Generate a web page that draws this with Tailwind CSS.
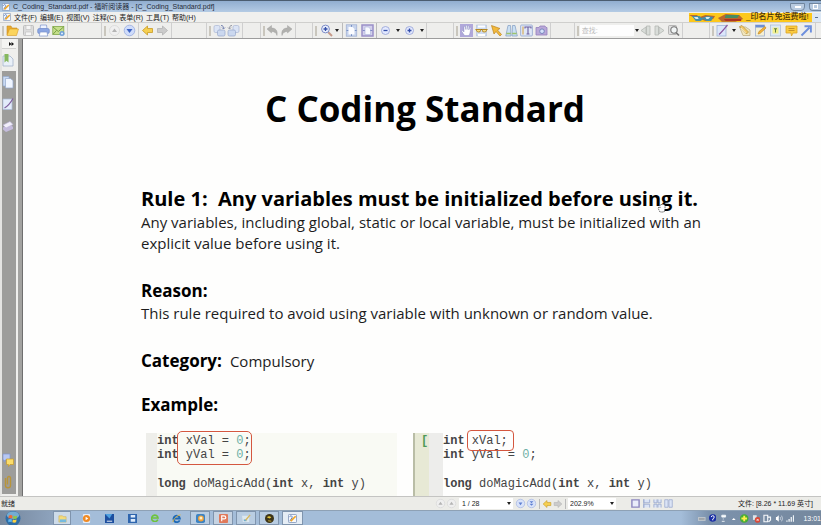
<!DOCTYPE html>
<html lang="zh-CN">
<head>
<meta charset="utf-8">
<title>C_Coding_Standard.pdf</title>
<script src="https://cdn.jsdelivr.net/npm/@tailwindcss/browser@4"></script>
</head>
<body class="h-screen overflow-hidden flex flex-col bg-[#ededeb] text-[#222] font-['Liberation_Sans','Noto_Sans_CJK_SC',sans-serif]">
<svg class="hidden">
  <symbol id="caret" viewBox="0 0 4 3"><path d="M0 0h4L2 3z" fill="#222"/></symbol>
  <symbol id="folder" viewBox="0 0 13 13"><path d="M1 11V2h4l1 2h5v2" fill="#e9a92c" stroke="#c98d1e" stroke-width=".6"/><path d="M1 11.5 3.500 5H12.500L10.500 11.500z" fill="#fbd45c" stroke="#d69a25" stroke-width=".6"/></symbol>
  <symbol id="save" viewBox="0 0 13 13"><rect x="1.500" y="1.500" width="10" height="10" rx="1" fill="#dcdcdc" stroke="#bdbdbd"/><path d="M4 1.500h5v4H4zM3.500 8h6v3.500h-6z" fill="#f5f5f5" stroke="#c4c4c4" stroke-width=".7"/></symbol>
  <symbol id="print" viewBox="0 0 13 13"><path d="M3.500 1h6l.5 4H3z" fill="#eef3ff" stroke="#7c93cc" stroke-width=".7"/><rect x=".7" y="4.500" width="11.600" height="5" rx="1.500" fill="#8ba6e3" stroke="#6a85c4" stroke-width=".6"/><path d="M3 8h7l.7 4H2.300z" fill="#fff" stroke="#7c93cc" stroke-width=".7"/></symbol>
  <symbol id="mail" viewBox="0 0 13 13"><rect x=".8" y="2.500" width="11" height="8" fill="#c6df8b" stroke="#7fa747" stroke-width=".8"/><path d="M1 3l5.300 4.500L11.500 3M1 10.300l3.600-4" fill="none" stroke="#6f9a3d" stroke-width=".9"/><circle cx="10" cy="9.500" r="2.500" fill="#6f9fd8"/><circle cx="10" cy="9.500" r="1" fill="#e6f0fa"/></symbol>
  <symbol id="up" viewBox="0 0 13 13"><circle cx="6.500" cy="6.500" r="5" fill="#efefef" stroke="#d4d4d4" stroke-width=".7"/><path d="M6.500 4.500 9 8H4z" fill="#b4b4b4"/></symbol>
  <symbol id="down" viewBox="0 0 13 13"><circle cx="6.500" cy="6.500" r="5.300" fill="#cfdcfa" stroke="#98abde" stroke-width=".8"/><path d="M6.500 9 9.500 5h-6z" fill="#3e64c4"/></symbol>
  <symbol id="navdown" viewBox="0 0 13 13"><circle cx="6.500" cy="6.500" r="5" fill="#d9e3fa" stroke="#a3b4e2" stroke-width=".8"/><path d="M6.500 8.500 8.800 5.300H4.200z" fill="#5f7fd0"/></symbol>
  <symbol id="navlast" viewBox="0 0 13 13"><circle cx="6.500" cy="6.500" r="5" fill="#d9e3fa" stroke="#a3b4e2" stroke-width=".8"/><path d="M6.500 6.300 8.800 3.800H4.200zM6.500 9.300 8.800 6.800H4.200z" fill="#5f7fd0"/></symbol>
  <symbol id="left" viewBox="0 0 13 13"><path d="M1.500 6.500 6.500 2v2.500H11.500v4H6.500V11z" fill="#f6cf50" stroke="#c89b24" stroke-width=".8"/></symbol>
  <symbol id="right" viewBox="0 0 13 13"><path d="M11.500 6.500 6.500 2v2.500H1.500v4h5V11z" fill="#cbcbcb" stroke="#b3b3b3" stroke-width=".8"/></symbol>
  <symbol id="rotr" viewBox="0 0 13 13"><rect x="1" y="1.500" width="6" height="7" rx="1.500" fill="#dbe4f5" stroke="#a9b6d2" stroke-width=".7"/><rect x="4.500" y="6" width="7.500" height="6" rx="1.500" fill="#cbd8ef" stroke="#97a7cc" stroke-width=".7"/><path d="M8 1.500c2 0 2.500 1 2.500 3M9 3.500l1.500 1.500L12 3.500" fill="none" stroke="#6776a8" stroke-width=".9"/></symbol>
  <symbol id="rotl" viewBox="0 0 13 13"><rect x="6" y="1.500" width="6" height="7" rx="1.500" fill="#dbe4f5" stroke="#a9b6d2" stroke-width=".7"/><rect x="1" y="6" width="7.500" height="6" rx="1.500" fill="#cbd8ef" stroke="#97a7cc" stroke-width=".7"/><path d="M5 1.500c-2 0-2.500 1-2.500 3M1 3.500 2.500 5 4 3.500" fill="none" stroke="#8a8d9c" stroke-width=".9"/></symbol>
  <symbol id="undo" viewBox="0 0 13 13"><path d="M1 5 5.500 1.500V4c4 0 6.500 2.500 5.500 7.500C10 8.500 8.500 7.500 5.500 7.500V9z" fill="#b1b1ae" stroke="#999" stroke-width=".4"/></symbol>
  <symbol id="redo" viewBox="0 0 13 13"><path d="M12 5 7.500 1.500V4C3.500 4 1 6.500 2 11.500 3 8.500 4.500 7.500 7.500 7.500V9z" fill="#b1b1ae" stroke="#999" stroke-width=".4"/></symbol>
  <symbol id="zoom" viewBox="0 0 13 13"><path d="m8 8 4 4" stroke="#c59a8a" stroke-width="2"/><circle cx="5.500" cy="5" r="3.900" fill="#e9effd" stroke="#7d8cc6" stroke-width="1"/><path d="M3.500 5h4M5.500 3v4" stroke="#344fa8" stroke-width="1.300"/></symbol>
  <symbol id="fitp" viewBox="0 0 13 13"><rect x="1.200" y=".8" width="10.600" height="11.400" fill="#c6d3ec" stroke="#94a6ce" stroke-width=".6"/><path d="M3.500 3h4l2 2v5.500h-6z" fill="#fbfcff"/><path d="M6.500 1v1.800M6.500 10.200V12M1.500 6.500h1.800M9.800 6.500h1.800" stroke="#6f8abf" stroke-width=".9"/></symbol>
  <symbol id="fitw" viewBox="0 0 13 13"><rect x="1" y="1" width="11" height="11" fill="#d3d0ec" stroke="#9a90c8" stroke-width="1.500"/><path d="M4 3h3.500l2 2v5.500H4z" fill="#f8faff" stroke="#a9b4da" stroke-width=".6"/><path d="M1.800 6.500h2M9.300 6.500h2" stroke="#7582c2" stroke-width=".9"/></symbol>
  <symbol id="minus" viewBox="0 0 13 13"><circle cx="6.500" cy="6.500" r="4" fill="#e4eaff" stroke="#9ca7d8" stroke-width=".9"/><path d="M4.500 6.500h4" stroke="#344fa8" stroke-width="1.300"/></symbol>
  <symbol id="plus" viewBox="0 0 13 13"><circle cx="6.500" cy="6.500" r="4" fill="#e4eaff" stroke="#9ca7d8" stroke-width=".9"/><path d="M4.500 6.500h4M6.500 4.500v4" stroke="#344fa8" stroke-width="1.300"/></symbol>
  <symbol id="hand" viewBox="0 0 13 13"><rect width="13" height="13" fill="#b0a8da"/><path d="M4.500 11.500 1.800 7.500c-.4-1 .8-1.300 1.500-.3L4 8V3c0-1 1.300-1 1.400 0l.3 2.500V2c0-1 1.400-1 1.400 0v3.500L7.500 2.500c.2-1 1.400-.8 1.400 0L8.800 6l.7-2c.4-.8 1.500-.5 1.300.3L10 9l-1 2.500z" fill="#fff" stroke="#8087bd" stroke-width=".4"/></symbol>
  <symbol id="glasses" viewBox="0 0 13 13"><path d="M1.500 1h10v11h-10z" fill="#cfdcf1" stroke="#b2c1da" stroke-width=".6"/><path d="M3 2.500h7M3 11h7" stroke="#fff" stroke-width="2"/><path d="M.5 5.500h12" stroke="#a07414" stroke-width="1"/><path d="M1.500 5.500h4v1.300q0 1.200-1.800 1.200T1.500 6.800zM7.500 5.500h4v1.300q0 1.200-2.200 1.200T7.500 6.800z" fill="#f5dc84" stroke="#b08420" stroke-width=".9"/></symbol>
  <symbol id="arrow" viewBox="0 0 13 13"><path d="m1.500 1.500 8.500 3-2.500 1.500 4 4.500-1.500 1.500-4-4.500L4 10z" fill="#f2b93a" stroke="#bd8420" stroke-width=".7"/></symbol>
  <symbol id="binoc" viewBox="0 0 13 13"><path d="M3 1.500h2.500L6 12H.8zM7.500 1.500H10L12.300 12H7z" fill="#cbe0f3" stroke="#8ba5c8" stroke-width=".8"/><path d="M1.300 9.500h4.500M7.200 9.500h4.500" stroke="#9cc26c" stroke-width="1.600"/></symbol>
  <symbol id="text" viewBox="0 0 13 13"><rect x=".6" y="1" width="11.800" height="11" rx="1" fill="#dfe7f7" stroke="#93a7cf" stroke-width=".8"/><path d="M3 2.500v8" stroke="#d6a33c"/><path d="M5 4.500V3h6v1.500M8 3v7M6.500 10h3" fill="none" stroke="#6c5f9f" stroke-width="1.100"/></symbol>
  <symbol id="cam" viewBox="0 0 13 13"><path d="M1 3.500h3l1-1.500h5l1 1.500h1V11H1z" fill="#b9a8d8" stroke="#9582be" stroke-width=".8"/><circle cx="7" cy="7.200" r="2.300" fill="#d6e2fa" stroke="#6f7fb8" stroke-width=".9"/></symbol>
  <symbol id="prev" viewBox="0 0 13 13"><path d="M7.500 2h3.500v9H7.500zM7 3v7L2 6.500z" fill="#d9ddd9" stroke="#b4b7b4" stroke-width=".8"/></symbol>
  <symbol id="next" viewBox="0 0 13 13"><path d="M2 2h3.500v9H2zM6 3v7l5-3.500z" fill="#d9ddd9" stroke="#b4b7b4" stroke-width=".8"/></symbol>
  <symbol id="find" viewBox="0 0 13 13"><rect x="1.500" y="1.500" width="8" height="9" rx="1" fill="#ddd" stroke="#a0a0a0" stroke-width=".7"/><circle cx="7" cy="6" r="3.200" fill="#f0f4f4" stroke="#777" stroke-width="1.100"/><path d="m9 8.500 3 3" stroke="#777" stroke-width="1.700"/></symbol>
  <symbol id="pen" viewBox="0 0 13 13"><rect x="1" y="1.500" width="9" height="10.500" fill="#dbe6fa" stroke="#9fb2d6" stroke-width=".8"/><path d="M3 10.500C6 8 9 4 11.500 1" stroke="#8b589f" stroke-width="1.300" fill="none"/></symbol>
  <symbol id="stamp" viewBox="0 0 13 13"><path d="M1.500 3h6l4.500 3v5.500H5z" fill="#f1e7bf" stroke="#b9a878" stroke-width=".7"/><path d="m1.500 2.500 2.500-1 6.500 6.500-2 2z" fill="#f0c766" stroke="#b18f45" stroke-width=".7"/><path d="m3 4 5 4.800" stroke="#fff3cf" stroke-width=".8"/></symbol>
  <symbol id="note" viewBox="0 0 13 13"><rect x="1.500" y="1" width="9" height="11" fill="#f4efd4" stroke="#9fb1d2" stroke-width=".8"/><path d="M1.500 1h9v2.500h-9z" fill="#6d8fd4"/><path d="m4 10 1-2.500L11 2.500l1 1.500-6 5.500z" fill="#f5b43a" stroke="#ba7f22" stroke-width=".6"/></symbol>
  <symbol id="tbox" viewBox="0 0 13 13"><rect x="1.500" y="1" width="10" height="11" fill="#dce9f6" stroke="#a9bad1" stroke-width=".7"/><path d="M3.500 3.500h6v6h-6z" fill="#f2ef8c"/><path d="M5 4.800h3M6.500 4.800v3.700" stroke="#5b7d43" stroke-width="1"/></symbol>
  <symbol id="comment" viewBox="0 0 13 13"><path d="M1 2h11v7H8l-1.500 3L6 9H1z" fill="#fbcb3f" stroke="#dca326" stroke-width=".8"/><path d="M3.500 4.500h6M3.500 6.500h6" stroke="#b98420" stroke-width=".8"/></symbol>
  <symbol id="link" viewBox="0 0 13 13"><path d="M1.500 11.500 9.500 3.500M4.500 2.300h6.400v6.200" stroke="#6d8fdd" stroke-width="1.900" fill="none"/></symbol>
  <symbol id="app" viewBox="0 0 10 10"><rect x=".5" y=".5" width="9" height="9" rx="1" fill="#f6f8fb" stroke="#6e86ae" stroke-width=".8"/><path d="M1.500 3.500C3 1 5 2 4.500 4L2 8" fill="none" stroke="#5a7fc2" stroke-width="1.100"/><path d="m3 8 5.500-5.500" stroke="#f0a424" stroke-width="1.900"/></symbol>
  <symbol id="bookmark" viewBox="0 0 12 14"><path d="M1 3h7l3 3v7H1z" fill="#e9f0f8" stroke="#a5b4ca" stroke-width=".8"/><path d="M2.500 1H6.500v8.500L4.500 7.800l-2 1.700z" fill="#86b85e"/></symbol>
  <symbol id="pages" viewBox="0 0 12 14"><path d="M1 1.500h6V11H1z" fill="#c9daf3" stroke="#93a9cd" stroke-width=".7"/><path d="M3.500 3.500h5l2.500 2V13H3.500z" fill="#eff5ff" stroke="#92a8cc" stroke-width=".7"/></symbol>
  <symbol id="sign" viewBox="0 0 12 14"><path d="M1 2h9v10.500H1z" fill="#e3ecfa" stroke="#aabbd8" stroke-width=".7"/><path d="M2.500 11C6 9 8.500 6 11 1.500" stroke="#80609f" stroke-width="1.200" fill="none"/></symbol>
  <symbol id="layers" viewBox="0 0 12 14"><path d="m1 8.500 7-3.500 3 3v2L4 13l-3-2.500z" fill="#c4bbdc"/><path d="m1 6 7-3.500 3 3L4 9z" fill="#f2effa" stroke="#b7aed3" stroke-width=".6"/></symbol>
  <symbol id="chat" viewBox="0 0 12 14"><path d="M1 1h7v6H3L2 9V7H1z" fill="#b8c8f2" stroke="#7f95d3" stroke-width=".7"/><path d="M4.500 6H11.500v5.500H8L6.500 13.500v-2h-2z" fill="#fbdd6b" stroke="#c79b2b" stroke-width=".7"/></symbol>
  <symbol id="clip" viewBox="0 0 12 14"><path d="M3.500 3v7.500q0 2.200 2.500 2.200t2.500-2.200V3.500Q8.500 1.500 7 1.500T5.500 3.500v6" fill="none" stroke="#b8943a" stroke-width="1.400"/></symbol>
  <symbol id="laycol" viewBox="0 0 10 10"><path d="M.8.8h3.700v8.400H.8zM5.500.8h3.700v8.400H5.500z" fill="#dbe4f6" stroke="#9eadd0" stroke-width=".9"/></symbol>
  <symbol id="layone" viewBox="0 0 10 10"><path d="M1 1h8v8H1z" fill="#e9ecfa" stroke="#8d88c0" stroke-width="1.600"/></symbol>
  <symbol id="laycont" viewBox="0 0 10 10"><path d="M2 .5v3.700h6.500V.5M2 9.500V5.800h6.500v3.700M2 0v10" fill="#dbe4f6" stroke="#9eadd0" stroke-width="1"/></symbol>
  <symbol id="laygrid" viewBox="0 0 10 10"><path d="M1 .5v3.700h3.500V.5M5.500.5v3.700H9V.5M1 9.500V5.800h3.500v3.700M5.500 9.500V5.800H9v3.700" fill="#dbe4f6" stroke="#9eadd0" stroke-width="1"/></symbol>
  <symbol id="orb" viewBox="0 0 18 16"><circle cx="9" cy="8" r="8" fill="#2d6da6"/><ellipse cx="9" cy="4.500" rx="6.500" ry="4" fill="#74acd2"/><path d="M4.500 5q2-1.300 4 0l-.4 3q-2-1-4 0z" fill="#ef6a35"/><path d="M9.300 5q2 1 4.200 0l-.5 3q-2 1-4 0z" fill="#90c648"/><path d="M4 9q2-1 4 0l-.5 3q-1.700-1-3.500 0z" fill="#5fb4ee"/><path d="M8.800 9q2 1 4 0l-.5 3q-2 1-4 0z" fill="#fbd142"/></symbol>
</svg>

<header>
  <div class="h-3 flex items-center border-t border-[#4b5d70] bg-linear-to-b from-[#91aed0] to-[#b4cbe4] pl-[2px]">
    <svg class="size-[8px] mr-[3px]"><use href="#app"/></svg>
    <h1 class="text-[7px] leading-none text-[#1f2a38] flex-1">C_Coding_Standard.pdf - 福昕阅读器 - [C_Coding_Standard.pdf]</h1>
    <button aria-label="最小化" class="w-[15px] h-2 mr-1 border border-[#71869f] rounded-b-sm bg-[#b9cbe0] flex items-center justify-center"><span class="w-[6px] h-[2px] bg-white"></span></button>
    <button aria-label="还原" class="w-3 h-2 border border-r-0 border-[#71869f] rounded-bl-sm bg-[#b9cbe0] flex items-center justify-center"><span class="size-[5px] border border-white"></span></button>
  </div>
  <nav class="h-[10px] flex items-center bg-[#f0f0ee] pl-[3px] text-[7px] leading-none">
    <svg class="size-[8px] mr-[3px]"><use href="#app"/></svg>
    <div class="flex flex-1 gap-[3px]">
      <button>文件(F)</button><button>编辑(E)</button><button>视图(V)</button><button>注释(C)</button><button>表单(R)</button><button>工具(T)</button><button>帮助(H)</button>
    </div>
    <a href="#" class="flex items-center h-[9px] w-[123px] bg-[#fdc81c] text-[8px] font-medium text-[#4a3208] whitespace-nowrap">
      <svg class="w-[57px] h-[9px] shrink-0" viewBox="0 0 59 9"><path d="M0 2h8l3 2 6-2 10 1-2 3-8 2-8-3-5-1zM30 5l8-4 14 1 4 4-8 3H34z" fill="#b9672d"/><path d="M3 3h8l2 2 6-2 6 1-2 4h-5l-3-2-3 2H7z" fill="#458ea9"/><path d="M5 4h4l1 2H7zM17 4h5l-2 2h-2z" fill="#d9edf0"/><path d="M38 2h14l-2 3H37z" fill="#488b62"/><path d="M36 6h18v2H38z" fill="#ad3324"/></svg>
      <span>_印名片免运费啦!</span>
    </a>
    <button aria-label="最小化文档" class="w-[9px] h-[9px] bg-[#dce8f5] flex items-center justify-center"><span class="w-[3px] h-px bg-[#5c7390]"></span></button>
  </nav>

  <div role="toolbar" aria-label="工具栏" class="h-[17px] flex items-stretch bg-[#eeeeec] border-t border-b border-t-[#cfcfcd] border-b-[#9c9c9c] *:shrink-0">
    <div class="w-[68px] flex items-center justify-between pl-[2px] pr-[2px] border-r border-[#cfcfcf]">
      <i class="w-[2px] h-[10px] bg-[#c9c6bd]"></i>
      <button aria-label="打开"><svg class="size-[13px]"><use href="#folder"/></svg></button>
      <button aria-label="保存"><svg class="size-[13px]"><use href="#save"/></svg></button>
      <button aria-label="打印"><svg class="size-[13px]"><use href="#print"/></svg></button>
      <button aria-label="邮件"><svg class="size-[13px]"><use href="#mail"/></svg></button>
    </div>
    <div class="w-[34px] border-r border-[#cfcfcf]"></div>
    <div class="w-[37px] flex items-center justify-between px-[2px] border-r border-[#cfcfcf]">
      <i class="w-[2px] h-[10px] bg-[#c9c6bd]"></i>
      <button aria-label="上一页"><svg class="size-[13px]"><use href="#up"/></svg></button>
      <button aria-label="下一页"><svg class="size-[13px]"><use href="#down"/></svg></button>
    </div>
    <div class="w-[33px] flex items-center justify-between px-[2px] border-r border-[#cfcfcf]">
      <button aria-label="后退"><svg class="size-[13px]"><use href="#left"/></svg></button>
      <button aria-label="前进"><svg class="size-[13px]"><use href="#right"/></svg></button>
    </div>
    <div class="w-[35px] border-r border-[#cfcfcf]"></div>
    <div class="w-[36px] flex items-center justify-between px-[2px] border-r border-[#cfcfcf]">
      <i class="w-[2px] h-[10px] bg-[#c9c6bd]"></i>
      <button aria-label="向右旋转"><svg class="size-[13px]"><use href="#rotr"/></svg></button>
      <button aria-label="向左旋转"><svg class="size-[13px]"><use href="#rotl"/></svg></button>
    </div>
    <div class="w-[18px] border-r border-[#cfcfcf]"></div>
    <div class="w-[35px] flex items-center justify-between px-[2px] border-r border-[#cfcfcf]">
      <i class="w-[2px] h-[10px] bg-[#c9c6bd]"></i>
      <button aria-label="撤销"><svg class="size-[13px]"><use href="#undo"/></svg></button>
      <button aria-label="重做"><svg class="size-[13px]"><use href="#redo"/></svg></button>
    </div>
    <div class="w-[17px] border-r border-[#cfcfcf]"></div>
    <div class="w-[30px] flex items-center justify-between pl-[2px] pr-[3px] border-r border-[#bbb]">
      <i class="w-[2px] h-[10px] bg-[#c9c6bd]"></i>
      <button aria-label="缩放工具"><svg class="size-[13px]"><use href="#zoom"/></svg></button>
      <button aria-label="缩放选项"><svg class="w-[4px] h-[3px]"><use href="#caret"/></svg></button>
    </div>
    <div class="w-[34px] flex items-center justify-between px-[2px] border-r border-[#bbb]">
      <button aria-label="适合页面"><svg class="size-[13px]"><use href="#fitp"/></svg></button>
      <button aria-label="适合宽度"><svg class="size-[13px]"><use href="#fitw"/></svg></button>
    </div>
    <div class="w-[50px] flex items-center justify-between px-[2px] border-r border-[#cfcfcf]">
      <button aria-label="缩小"><svg class="size-[13px]"><use href="#minus"/></svg></button>
      <button aria-label="缩小选项"><svg class="w-[4px] h-[3px]"><use href="#caret"/></svg></button>
      <button aria-label="放大"><svg class="size-[13px]"><use href="#plus"/></svg></button>
      <button aria-label="放大选项"><svg class="w-[4px] h-[3px]"><use href="#caret"/></svg></button>
    </div>
    <div class="w-[27px] border-r border-[#cfcfcf]"></div>
    <div class="w-[97px] flex items-center justify-between px-[2px] border-r border-[#cfcfcf]">
      <i class="w-[2px] h-[10px] bg-[#c9c6bd]"></i>
      <button aria-label="手形工具"><svg class="size-[13px]"><use href="#hand"/></svg></button>
      <button aria-label="阅读"><svg class="size-[13px]"><use href="#glasses"/></svg></button>
      <button aria-label="选择"><svg class="size-[13px]"><use href="#arrow"/></svg></button>
      <button aria-label="查找"><svg class="size-[13px]"><use href="#binoc"/></svg></button>
      <button aria-label="选择文本"><svg class="size-[13px]"><use href="#text"/></svg></button>
      <button aria-label="快照"><svg class="size-[13px]"><use href="#cam"/></svg></button>
    </div>
    <div class="w-[24px] border-r border-[#cfcfcf]"></div>
    <div class="w-[108px] flex items-center justify-between px-[2px] border-r border-[#cfcfcf]">
      <i class="w-[2px] h-[10px] bg-[#c9c6bd]"></i>
      <input type="text" aria-label="查找" placeholder="查找:" class="w-[54px] h-[11px] px-[2px] text-[7px] bg-[#fdfdfd] placeholder:text-[#bbb]">
      <button aria-label="查找选项"><svg class="w-[4px] h-[3px]"><use href="#caret"/></svg></button>
      <button aria-label="查找上一个"><svg class="size-[13px]"><use href="#prev"/></svg></button>
      <button aria-label="查找下一个"><svg class="size-[13px]"><use href="#next"/></svg></button>
      <button aria-label="高级查找"><svg class="size-[13px]"><use href="#find"/></svg></button>
    </div>
    <div class="w-[27px] border-r border-[#cfcfcf]"></div>
    <div class="w-[106px] flex items-center justify-between px-[2px] border-r border-[#cfcfcf]">
      <i class="w-[2px] h-[10px] bg-[#c9c6bd]"></i>
      <button aria-label="铅笔"><svg class="size-[13px]"><use href="#pen"/></svg></button>
      <button aria-label="铅笔选项"><svg class="w-[4px] h-[3px]"><use href="#caret"/></svg></button>
      <button aria-label="图章"><svg class="size-[13px]"><use href="#stamp"/></svg></button>
      <button aria-label="注释"><svg class="size-[13px]"><use href="#note"/></svg></button>
      <button aria-label="文本框"><svg class="size-[13px]"><use href="#tbox"/></svg></button>
      <button aria-label="备注"><svg class="size-[13px]"><use href="#comment"/></svg></button>
      <button aria-label="链接"><svg class="size-[13px]"><use href="#link"/></svg></button>
    </div>
  </div>
</header>

<div class="flex-1 min-h-0 flex">
  <aside class="w-[18px] shrink-0 flex flex-col bg-[#9d9d9b] border-l-2 border-r-2 border-l-[#e4e4e2] border-r-[#efefed] border-b-2 border-b-[#efefed]">
    <button aria-label="展开" class="h-[9px] shrink-0 bg-[#f4f4f2] flex items-center justify-end pr-[2px]"><svg class="w-[5px] h-[4px]" viewBox="0 0 5 4"><path d="M0 0l2.500 2L0 4zM2.500 0 5 2 2.500 4z" fill="#111"/></svg></button>
    <button aria-label="书签" class="h-[23px] shrink-0 bg-[#efefed] border-t border-[#d0d0ce] flex items-center"><svg class="w-[12px] h-[14px]"><use href="#bookmark"/></svg></button>
    <button aria-label="页面" class="h-[22px] shrink-0 flex items-center"><svg class="w-[12px] h-[14px]"><use href="#pages"/></svg></button>
    <button aria-label="签名" class="h-[22px] shrink-0 flex items-center"><svg class="w-[12px] h-[14px]"><use href="#sign"/></svg></button>
    <button aria-label="图层" class="h-[22px] shrink-0 flex items-center"><svg class="w-[12px] h-[14px]"><use href="#layers"/></svg></button>
    <button aria-label="注释面板" class="mt-auto h-[22px] shrink-0 flex items-center"><svg class="w-[12px] h-[14px]"><use href="#chat"/></svg></button>
    <button aria-label="附件" class="h-[22px] mb-[1px] shrink-0 flex items-center"><svg class="w-[12px] h-[14px]"><use href="#clip"/></svg></button>
  </aside>
  <div class="w-[5px] shrink-0 bg-[#a3a3a1] border-r border-[#6f6f6f]"></div>

  <main class="flex-1 min-w-0 overflow-hidden relative bg-[#fefefd] pl-[118px] pr-[112px] pt-[44px] text-[15px] leading-[21px] text-[#1d1d1d] font-['Open_Sans',sans-serif]">
    <h2 class="text-center text-[35px] leading-[52px] font-bold text-black whitespace-nowrap">C Coding Standard</h2>
    <h3 class="mt-[50px] text-[20px] leading-[27px] font-bold text-black whitespace-pre">Rule 1:  Any variables must be initialized before using it.</h3>
    <p>Any variables, including global, static or local variable, must be initialized with an explicit value before using it.</p>
    <h3 class="mt-[25px] text-[17px] leading-[24px] font-bold text-black">Reason:</h3>
    <p>This rule required to avoid using variable with unknown or random value.</p>
    <p class="mt-[25px] leading-[24px]"><b class="text-[17px] text-black mr-2">Category:</b>Compulsory</p>
    <h3 class="mt-[20px] text-[17px] leading-[24px] font-bold text-black">Example:</h3>
    <div class="mt-[16px] ml-[5px] h-[64px] flex text-[12px] leading-[14px] text-[#444] font-['Liberation_Mono',monospace]">
      <div class="relative w-[251px] shrink-0 bg-[#f9faf4] border-l-[11px] border-[#eeeeea] pt-[1px]">
        <div class="whitespace-pre"><b>int</b> xVal = <span class="text-[#6fb0a6]">0</span>;</div>
        <div class="whitespace-pre"><b>int</b> yVal = <span class="text-[#6fb0a6]">0</span>;</div>
        <div class="mt-[15px] whitespace-pre"><b>long</b> doMagicAdd(<b>int</b> x, <b>int</b> y)</div>
        <span class="absolute left-[20px] -top-[2px] w-[75px] h-[34px] border border-[#d4573f] rounded-[5px]"></span>
      </div>
      <div class="ml-[16px] w-[30px] shrink-0 bg-[#e7e9d5] border-l-2 border-r-[14px] border-l-[#b9bda6] border-r-[#ededeb] pl-[6px] pt-[1px] font-bold text-[#4d9a55]">[</div>
      <div class="relative pt-[1px]">
        <div class="whitespace-pre"><b>int</b> xVal;</div>
        <div class="whitespace-pre"><b>int</b> yVal = <span class="text-[#6fb0a6]">0</span>;</div>
        <div class="mt-[15px] whitespace-pre"><b>long</b> doMagicAdd(<b>int</b> x, <b>int</b> y)</div>
        <span class="absolute left-[24px] -top-[3px] w-[47px] h-[21px] border border-[#d4573f] rounded-[4px]"></span>
      </div>
    </div>
    <svg class="absolute left-[634px] top-[163px] w-[10px] h-[11px]" viewBox="0 0 10 11"><path d="M3 10 1 6l1-1 1 1V3l1-1 1 1 1-1 1 1 1 0v4L7 10z" fill="#fff" stroke="#444" stroke-width=".8" stroke-dasharray="1.500 .8"/></svg>
  </main>
</div>

<footer>
  <div class="h-[14px] flex items-center bg-[#ecece8] border-t border-[#c4c4c2] text-[7px] leading-none text-[#222]">
    <span class="flex-1 pl-[1px]">就绪</span>
    <div class="flex items-center w-[238px] shrink-0">
      <button aria-label="首页"><svg class="size-[11px]"><use href="#up"/></svg></button>
      <button aria-label="上一页"><svg class="size-[11px]"><use href="#up"/></svg></button>
      <label class="flex items-center w-[54px] h-[11px] ml-[2px] bg-white pr-[2px]"><select aria-label="页码" class="appearance-none flex-1 min-w-0 pl-[3px] bg-transparent"><option>1 / 28</option></select><svg class="w-[4px] h-[3px]"><use href="#caret"/></svg></label>
      <button aria-label="下一页" class="ml-[2px]"><svg class="size-[11px]"><use href="#navdown"/></svg></button>
      <button aria-label="末页"><svg class="size-[11px]"><use href="#navlast"/></svg></button>
      <i class="w-px h-[10px] mx-[2px] bg-[#bbb]"></i>
      <button aria-label="后退"><svg class="size-[10px]"><use href="#left"/></svg></button>
      <button aria-label="前进" class="ml-[1px]"><svg class="size-[10px]"><use href="#right"/></svg></button>
      <i class="w-px h-[10px] mx-[2px] bg-[#bbb]"></i>
      <label class="flex items-center w-[48px] h-[11px] bg-white pr-[2px]"><select aria-label="缩放比例" class="appearance-none flex-1 min-w-0 pl-[2px] bg-transparent"><option>202.9%</option></select><svg class="w-[4px] h-[3px]"><use href="#caret"/></svg></label>
      <div class="flex gap-[2px] ml-auto">
        <button aria-label="单页"><svg class="size-[9px]"><use href="#layone"/></svg></button>
        <button aria-label="连续"><svg class="size-[9px]"><use href="#laycont"/></svg></button>
        <button aria-label="连续对开"><svg class="size-[9px]"><use href="#laygrid"/></svg></button>
        <button aria-label="对开"><svg class="size-[9px]"><use href="#laycol"/></svg></button>
      </div>
    </div>
    <span class="ml-[65px] w-[83px] shrink-0 whitespace-nowrap">文件: [8.26 * 11.69 英寸]</span>
  </div>

  <div class="h-[15px] flex items-stretch bg-[#a4bdd9] border-t border-[#8ea1b5] overflow-hidden">
    <div class="w-[53px] shrink-0 flex items-center pl-[4px] bg-linear-to-r from-[#75879d] to-[#8ea3bd]"><button aria-label="开始"><svg class="w-[18px] h-[15px]"><use href="#orb"/></svg></button></div>
    <div class="flex-1 flex items-stretch">
      <button aria-label="资源管理器" class="w-[18px] flex items-center justify-center bg-[#cddbe9] border border-[#7f94ad]"><svg class="size-[9px]" viewBox="0 0 10 10"><path d="M1 9V2h4l1 1h3v6z" fill="#f3dc7d" stroke="#cfae50" stroke-width=".6"/><path d="M2 6h7v3H2z" fill="#76bbdf"/></svg></button>
      <button aria-label="播放器" class="w-[30px] flex items-center justify-center"><svg class="size-[9px]" viewBox="0 0 10 10"><rect x="1" width="8" height="10" rx="1" fill="#e6edf7"/><circle cx="5" cy="5" r="4" fill="#f08a24"/><path d="m4 3 3 2-3 2z" fill="#fff"/></svg></button>
      <button aria-label="图像" class="w-[16px] flex items-center justify-center"><svg class="size-[9px]" viewBox="0 0 10 10"><rect width="10" height="10" fill="#1c4e9f"/><path d="m0 0 8 0-3 5z" fill="#4fa0df"/><path d="M2 8h6" stroke="#fff"/></svg></button>
      <button aria-label="视频" class="w-[30px] flex items-center justify-center"><svg class="size-[9px]" viewBox="0 0 10 10"><rect width="10" height="10" fill="#2e65ae"/><path d="M3 1h5v3H3zM3 5.500h5v3H3z" fill="#dceafa"/></svg></button>
      <button aria-label="浏览器" class="w-[16px] flex items-center justify-center"><svg class="size-[8px]" viewBox="0 0 10 10"><path d="M8.500 7A4 4 0 1 1 8.800 5H2" fill="none" stroke="#6dc33c" stroke-width="2"/></svg></button>
      <button aria-label="IE" class="w-[27px] flex items-center justify-center"><svg class="size-[9px]" viewBox="0 0 10 10"><path d="M8.500 7A3.600 3.600 0 1 1 8.800 5H2" fill="none" stroke="#1d69b7" stroke-width="2"/><path d="M1 9C1 6 6 1 9.500 1" fill="none" stroke="#e7b73a"/></svg></button>
      <div class="flex gap-[3px]">
        <button aria-label="程序一" class="w-[20px] flex items-center justify-center bg-[#b9cde2] border border-[#7f94ad]"><svg class="size-[9px]" viewBox="0 0 10 10"><rect width="10" height="10" rx="2" fill="#3c83c4"/><circle cx="5.500" cy="5" r="3.200" fill="#f3a136"/><path d="M4 3h3v3H4z" fill="#fff1c8"/></svg></button>
        <button aria-label="演示文稿" class="w-[20px] flex items-center justify-center bg-[#c6d3e2] border border-[#7f94ad]"><svg class="size-[9px]" viewBox="0 0 10 10"><rect width="10" height="10" rx="1" fill="#e0795a"/><path d="M3 8V2h2.500q2 0 2 1.800T5.500 5.500H3" fill="none" stroke="#fff" stroke-width="1.300"/></svg></button>
        <button aria-label="画图" class="w-[20px] flex items-center justify-center bg-[#b9cde2] border border-[#7f94ad]"><svg class="size-[9px]" viewBox="0 0 10 10"><path d="M0 2h8v7H1z" fill="#dce7ee"/><path d="M2 6h3v2H2z" fill="#6cadd2"/><path d="m4 7 5-6" stroke="#d8b65c" stroke-width="1.500"/></svg></button>
        <button aria-label="程序二" class="w-[20px] flex items-center justify-center bg-[#b9cde2] border border-[#7f94ad]"><svg class="size-[9px]" viewBox="0 0 10 10"><circle cx="5" cy="5" r="5" fill="#3d3519"/><path d="M2 3.500q3-2.500 5 .5L5 5z" fill="#e8c93e"/><path d="m3.500 7.500 3.500.5" stroke="#c9ad3a"/></svg></button>
        <button aria-label="福昕阅读器" class="w-[21px] flex items-center justify-center bg-[#e5edf5] border border-[#7f94ad]"><svg class="size-[9px]"><use href="#app"/></svg></button>
      </div>
    </div>
    <div class="w-[140px] shrink-0 flex items-center pl-[17px] gap-[3px] bg-linear-to-r from-[#a4bdd9] via-[#7c92ac] via-20% to-[#75889e] text-white leading-none">
      <svg class="w-[8px] h-[9px]" viewBox="0 0 8 9"><rect y="3" width="8" height="4" fill="#c1c7cc"/><path d="M1 5h6" stroke="#7b8288"/></svg>
      <svg class="size-[8px]" viewBox="0 0 8 8"><circle cx="4" cy="4" r="4" fill="#1b2fa5"/><path d="M2.500 3q0-1.500 1.500-1.500T5.500 3 4 5v1.500" fill="none" stroke="#fff"/></svg>
      <svg class="w-[8px] h-[9px]" viewBox="0 0 8 9"><path d="M3 1h4v2H3zM4 5h1M3 7.500h3" stroke="#edf2f7" fill="#fff"/></svg>
      <svg class="w-[8px] h-[9px]" viewBox="0 0 8 9"><path d="m2 6 2-2 2 2z" fill="#fff"/></svg>
      <svg class="size-[9px]" viewBox="0 0 9 9"><circle cx="4.500" cy="4.500" r="4.500" fill="#45ad35"/><path d="M4.500 1.500v6M1.500 4.500h6" stroke="#fff04c" stroke-width="2"/></svg>
      <svg class="size-[9px]" viewBox="0 0 9 9"><path d="M1 1h4v5H1z" fill="#dce3e9"/><circle cx="6" cy="6" r="3" fill="#d94a3a"/><path d="m5 5 2 2m0-2L5 7" stroke="#fff" stroke-width=".8"/></svg>
      <svg class="size-[9px]" viewBox="0 0 9 9"><path d="M1 1h4v7H1zM5 3h3v3L6 8" fill="none" stroke="#f5f8fa" stroke-width="1.200"/></svg>
      <svg class="size-[9px]" viewBox="0 0 9 9"><path d="M1 3h1l2-2v7L2 6H1z" fill="#fff"/><path d="M5.500 3q1 1.500 0 3M7 1.500q2 3 0 6" fill="none" stroke="#dce4ec" stroke-width=".8"/></svg>
      <svg class="size-[9px]" viewBox="0 0 9 9"><path d="M1 8V6.500M3.300 8V5M5.600 8V3M8 8V1" stroke="#eef3f7" stroke-width="1.400"/></svg>
      <time class="ml-[6px] text-[7px]">13:01</time>
    </div>
  </div>
</footer>
</body>
</html>
